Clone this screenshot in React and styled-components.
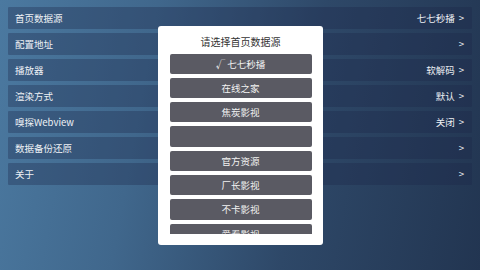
import styled, { createGlobalStyle } from "styled-components"

const GlobalStyle = createGlobalStyle`
    html, body, #root {
        margin: 0;
        padding: 0;
        width: 100%;
        height: 100%;
    }
    body {
        font-family: "Noto Sans CJK SC", "Noto Sans", sans-serif;
        overflow: hidden;
    }
`

const Screen = styled.div`
    position: relative;
    width: 480px;
    height: 270px;
    background: linear-gradient(100deg, #4b79a0 0%, #40678c 30%, #2e4868 62%, #223551 100%);
    overflow: hidden;
`

const Menu = styled.div`
    display: flex;
    flex-direction: column;
    gap: 4px;
    padding: 7px 8px 0 8px;
`

const Row = styled.div`
    display: flex;
    align-items: center;
    justify-content: space-between;
    height: 22px;
    padding: 0 8px 0 7px;
    background-color: rgba(28, 38, 72, 0.32);
    border-radius: 1px;
    color: #eef1f5;
    font-size: 9.5px;
`

const Value = styled.span`
    display: flex;
    gap: 4px;
`

const Overlay = styled.div`
    position: absolute;
    inset: 0;
    display: flex;
    align-items: center;
    justify-content: center;
`

const Dialog = styled.div`
    width: 165px;
    height: 219px;
    box-sizing: border-box;
    background: #ffffff;
    border-radius: 3px;
    padding: 8px 11px 11px 12px;
    display: flex;
    flex-direction: column;
`

const Title = styled.div`
    text-align: center;
    color: #333;
    font-size: 10px;
    line-height: 16px;
    margin-bottom: 4px;
`

const List = styled.div`
    flex: 1;
    overflow: hidden;
    display: flex;
    flex-direction: column;
    gap: 4px;
`

const Option = styled.div`
    flex-shrink: 0;
    height: 20.3px;
    border-radius: 2px;
    background: #5a5a63;
    color: #f2f2f2;
    font-size: 9.5px;
    display: flex;
    align-items: center;
    justify-content: center;
`

const rows = [
    ["首页数据源", "七七秒播"],
    ["配置地址", ""],
    ["播放器", "软解码"],
    ["渲染方式", "默认"],
    ["嗅探Webview", "关闭"],
    ["数据备份还原", ""],
    ["关于", ""],
]

const options = ["√ 七七秒播", "在线之家", "焦炭影视", "", "官方资源", "厂长影视", "不卡影视", "爱看影视"]

export default function App() {
    return (
        <>
            <GlobalStyle />
            <Screen>
                <Menu>
                    {rows.map(([label, value]) => (
                        <Row key={label}>
                            <span>{label}</span>
                            <Value>
                                {value && <span>{value}</span>}
                                <span>&gt;</span>
                            </Value>
                        </Row>
                    ))}
                </Menu>
                <Overlay>
                    <Dialog>
                        <Title>请选择首页数据源</Title>
                        <List>
                            {options.map((o, i) => (
                                <Option key={i}>{o}</Option>
                            ))}
                        </List>
                    </Dialog>
                </Overlay>
            </Screen>
        </>
    )
}
